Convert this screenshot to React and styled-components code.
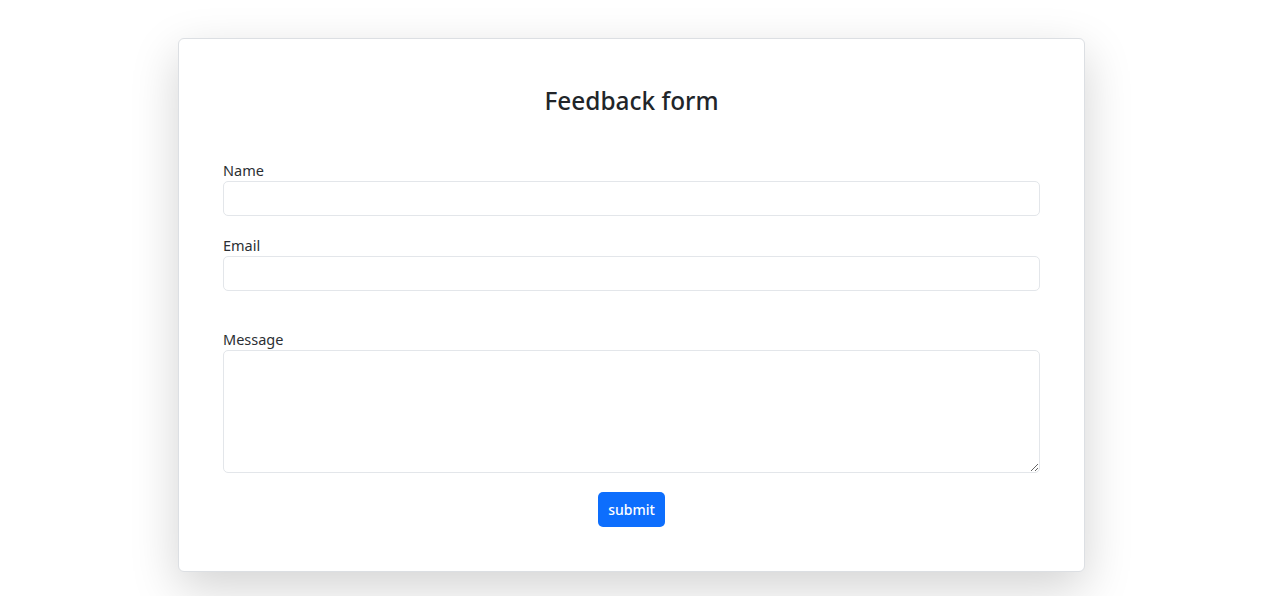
import React from "react";
import styled, { createGlobalStyle } from "styled-components";

const Global = createGlobalStyle`
  html, body { margin: 0; padding: 0; background: #fff; }
  body { font-family: "Noto Sans", "Open Sans", sans-serif; color: #212529; }
  * { box-sizing: border-box; }
`;

const Page = styled.div`
  padding: 38px 0 24px 178px;
`;

const Card = styled.form`
  width: 907px;
  height: 534px;
  border: 1px solid #dcdfe3;
  border-radius: 6px;
  background: #fff;
  box-shadow: 0 1rem 3rem rgba(0, 0, 0, 0.175);
  padding: 46px 44px 44px 44px;
  display: flex;
  flex-direction: column;
`;

const Title = styled.h2`
  margin: 0 0 44px;
  font-size: 24.4px;
  line-height: 32px;
  font-weight: 500;
  text-align: center;
  color: #212529;
`;

const Field = styled.div`
  display: flex;
  flex-direction: column;
  margin-top: ${(p) => p.$top || 0}px;
`;

const Label = styled.label`
  font-size: 14.5px;
  line-height: 19px;
  margin-bottom: 1px;
  color: #2b2f33;
`;

const Input = styled.input`
  height: 35px;
  width: 100%;
  border: 1px solid #e3e6ea;
  border-radius: 5px;
  font: inherit;
  padding: 6px 12px;
  outline: none;
`;

const TextArea = styled.textarea`
  height: 123px;
  width: 100%;
  border: 1px solid #e3e6ea;
  border-radius: 5px;
  font: inherit;
  padding: 6px 12px;
  resize: vertical;
  outline: none;
`;

const Actions = styled.div`
  display: flex;
  justify-content: center;
  margin-top: 19px;
`;

const Button = styled.button`
  height: 35px;
  padding: 0 10px;
  border: none;
  border-radius: 5px;
  background: #0d6efd;
  color: #fff;
  font-family: inherit;
  font-size: 14px;
  font-weight: 500;
  cursor: pointer;
`;

export default function App() {
  return (
    <>
      <Global />
      <Page>
        <Card onSubmit={(e) => e.preventDefault()}>
          <Title>Feedback form</Title>
          <Field>
            <Label>Name</Label>
            <Input type="text" />
          </Field>
          <Field $top={20}>
            <Label>Email</Label>
            <Input type="email" />
          </Field>
          <Field $top={39}>
            <Label>Message</Label>
            <TextArea />
          </Field>
          <Actions>
            <Button type="submit">submit</Button>
          </Actions>
        </Card>
      </Page>
    </>
  );
}
